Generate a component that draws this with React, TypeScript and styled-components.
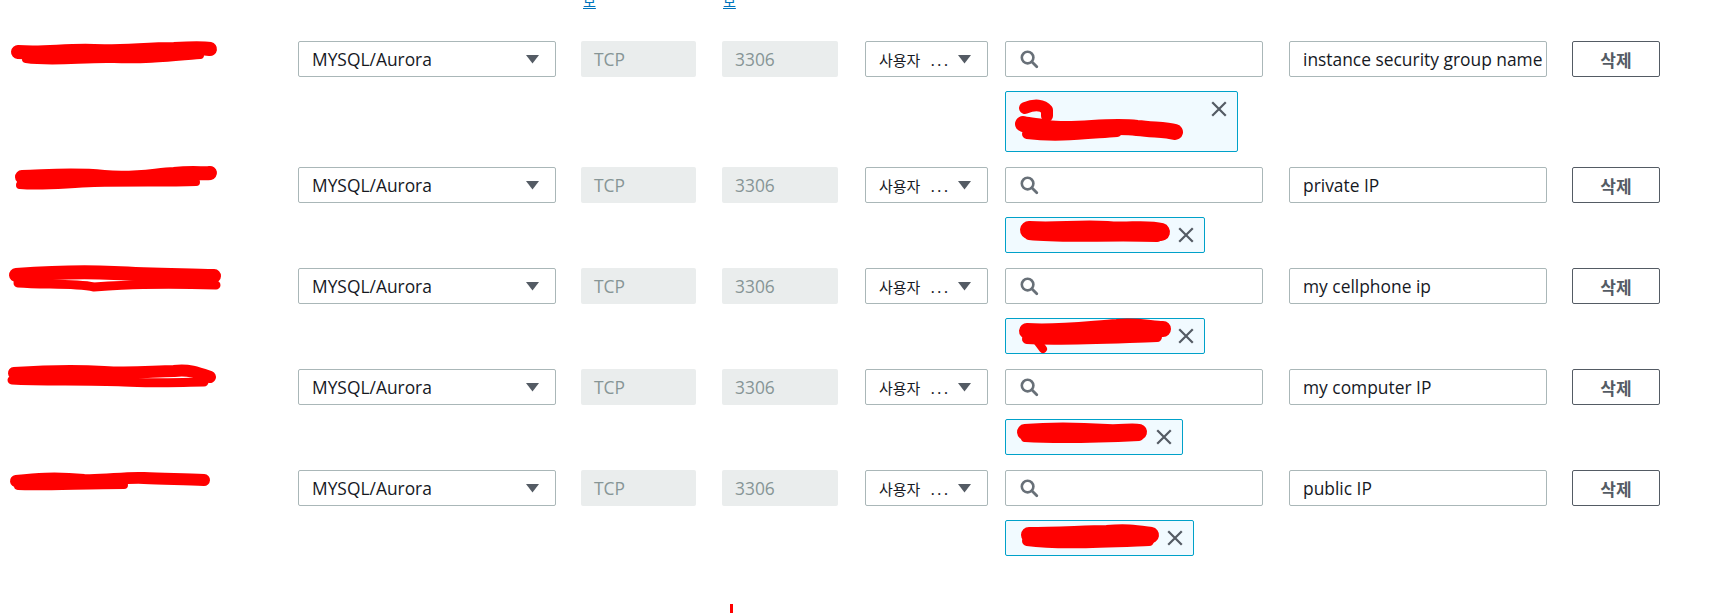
import React from "react";
import styled, { createGlobalStyle } from "styled-components";

const GlobalStyle = createGlobalStyle`
  html, body {
    margin: 0;
    padding: 0;
    background: #ffffff;
  }
  body {
    font-family: "Open Sans", "Noto Sans CJK KR", sans-serif;
    color: #16191f;
  }
`;

const COLUMNS = "298px 283px 141px 143px 140px 284px 283px 88px";

const Page = styled.div`
  width: 1725px;
  display: flex;
  flex-direction: column;
`;

const HeaderRow = styled.div`
  display: grid;
  grid-template-columns: ${COLUMNS};
  height: 20px;
  margin-top: -10px;
  align-items: end;
`;

const HeaderLink = styled.a<{ $col: number; $offset: number }>`
  grid-column: ${(p) => p.$col};
  padding-left: ${(p) => p.$offset}px;
  font-family: "Noto Sans CJK KR", sans-serif;
  font-size: 14px;
  line-height: 18px;
  color: #0073bb;
  text-decoration: underline;
  text-underline-offset: 1px;
`;

const RuleList = styled.div`
  display: flex;
  flex-direction: column;
  gap: 15px;
  margin-top: 31px;
`;

const RuleRow = styled.div`
  display: grid;
  grid-template-columns: ${COLUMNS};
  grid-template-rows: 36px auto;
  row-gap: 14px;
`;

const NameCell = styled.div`
  grid-column: 1;
  grid-row: 1;
  height: 36px;
`;

const NameScribble = styled.div`
  padding-left: 4px;
  padding-top: 1px;
`;

const Control = styled.div<{ $w: number }>`
  width: ${(p) => p.$w}px;
  height: 36px;
  box-sizing: border-box;
  border-radius: 2px;
  display: flex;
  align-items: center;
  font-size: 17.4px;
  white-space: nowrap;
  overflow: hidden;
`;

const SelectBox = styled(Control)`
  border: 1px solid #aab7b8;
  background: #ffffff;
  justify-content: space-between;
  padding: 0 16px 0 13px;
  color: #16191f;
`;

const SourceSelect = styled(SelectBox)`
  padding: 0 16px 0 13px;
`;

const SourceText = styled.span`
  font-family: "Noto Sans CJK KR", sans-serif;
  font-size: 15px;
`;

const Dots = styled.span`
  font-family: "Open Sans", sans-serif;
  font-size: 17px;
  letter-spacing: 2.2px;
  margin-left: 10px;
`;

const ReadOnlyField = styled(Control)`
  background: #eaeded;
  color: #879596;
  padding: 0 13px;
`;

const SearchField = styled(Control)`
  border: 1px solid #aab7b8;
  background: #ffffff;
  padding: 0 14px;
`;

const TextField = styled(Control)`
  border: 1px solid #aab7b8;
  background: #ffffff;
  padding: 0 12px 0 13px;
  color: #16191f;
`;

const DeleteButton = styled.button`
  width: 88px;
  height: 36px;
  box-sizing: border-box;
  border: 1px solid #545b64;
  border-radius: 2px;
  background: #ffffff;
  color: #545b64;
  font-family: "Noto Sans CJK KR", sans-serif;
  font-weight: 700;
  font-size: 17px;
  padding: 0;
  cursor: pointer;
`;

const Token = styled.div<{ $w: number; $h: number }>`
  grid-column: 6;
  grid-row: 2;
  width: ${(p) => p.$w}px;
  height: ${(p) => p.$h}px;
  box-sizing: border-box;
  border: 1px solid #00a1c9;
  border-radius: 2px;
  background: #f1faff;
  display: flex;
  align-items: flex-start;
  padding-left: 11px;
`;

const TokenLabel = styled.div<{ $w: number }>`
  width: ${(p) => p.$w}px;
  flex: none;
  height: 100%;
`;

const CloseButton = styled.button`
  width: 30px;
  height: 34px;
  margin-left: auto;
  margin-right: 3px;
  border: none;
  background: transparent;
  padding: 0;
  display: flex;
  align-items: center;
  justify-content: center;
  cursor: pointer;
`;

const Footer = styled.div`
  margin-top: 48px;
  margin-left: 730px;
  width: 3px;
  height: 9px;
  background: #ff0000;
`;

const ScribbleSvg = styled.svg`
  display: block;
  overflow: visible;
`;

const Caret = () => (
  <svg width="13" height="9" viewBox="0 0 13 9">
    <path d="M0 0 H13 L6.5 8.5 Z" fill="#545b64" />
  </svg>
);

const SearchIcon = () => (
  <svg width="19" height="19" viewBox="0 0 19 19">
    <circle cx="7.6" cy="7.6" r="5.8" fill="none" stroke="#687078" strokeWidth="2.6" />
    <path d="M11.8 11.8 L16.8 16.8" stroke="#687078" strokeWidth="2.8" strokeLinecap="round" />
  </svg>
);

const CloseIcon = () => (
  <svg width="16" height="16" viewBox="0 0 16 16">
    <path d="M2 2 L14 14 M14 2 L2 14" stroke="#545b64" strokeWidth="2.2" strokeLinecap="square" />
  </svg>
);

type Stroke = { d: string; w: number };

const Scribble = ({ width, height, strokes }: { width: number; height: number; strokes: Stroke[] }) => (
  <ScribbleSvg width={width} height={height} viewBox={`0 0 ${width} ${height}`}>
    {strokes.map((s, i) => (
      <path
        key={i}
        d={s.d}
        fill="none"
        stroke="#ff0000"
        strokeWidth={s.w}
        strokeLinecap="round"
        strokeLinejoin="round"
      />
    ))}
  </ScribbleSvg>
);

type Rule = {
  desc: string;
  name: Stroke[];
  token: { w: number; h: number; strokes: Stroke[] };
};

const rules: Rule[] = [
  {
    desc: "instance security group name",
    name: [
      { d: "M14 10 C40 12 60 8 90 9 C120 10 140 7 170 7 C190 6 200 6 206 7", w: 14 },
      { d: "M22 17 C50 21 80 16 110 17 C140 18 160 16 196 13", w: 8 },
    ],
    token: {
      w: 233,
      h: 61,
      strokes: [
        { d: "M8 16 C18 12 26 13 30 18 L30 24", w: 12 },
        { d: "M6 32 C14 34 24 34 30 36 C60 40 90 32 120 36 C140 38 150 38 158 40", w: 16 },
        { d: "M10 42 C40 46 70 42 100 40", w: 10 },
      ],
    },
  },
  {
    desc: "private IP",
    name: [
      { d: "M18 9 C50 8 70 6 100 9 C130 12 150 7 170 6 C190 4 200 6 206 5", w: 14 },
      { d: "M16 17 C40 19 60 16 90 15 C130 14 160 15 192 14", w: 8 },
    ],
    token: {
      w: 200,
      h: 36,
      strokes: [
        { d: "M12 12 C40 14 60 10 90 12 C110 14 130 10 144 14", w: 18 },
        { d: "M12 18 C50 22 90 18 140 20", w: 8 },
      ],
    },
  },
  {
    desc: "my cellphone ip",
    name: [
      { d: "M12 6 C40 4 70 2 110 4 C150 6 180 6 210 7", w: 14 },
      { d: "M14 14 C40 16 70 14 90 18 C120 16 150 14 212 16", w: 9 },
    ],
    token: {
      w: 200,
      h: 36,
      strokes: [
        { d: "M10 12 C40 14 70 10 100 8 C120 6 135 10 146 10", w: 16 },
        { d: "M10 20 C40 22 80 20 140 18", w: 10 },
        { d: "M20 22 L26 30", w: 8 },
      ],
    },
  },
  {
    desc: "my computer IP",
    name: [
      { d: "M10 3 C40 1 70 0 100 2 C130 4 150 1 170 1 C185 -1 195 3 206 7", w: 12 },
      { d: "M8 10 C40 12 80 10 120 12 C150 14 180 12 200 12", w: 9 },
    ],
    token: {
      w: 178,
      h: 36,
      strokes: [
        { d: "M8 12 C30 10 60 10 90 12 C105 13 115 10 122 12", w: 16 },
        { d: "M8 18 C40 20 80 19 122 17", w: 8 },
      ],
    },
  },
  {
    desc: "public IP",
    name: [
      { d: "M12 10 C30 8 50 6 80 9 C100 10 120 6 140 7 C160 8 180 8 200 9", w: 12 },
      { d: "M14 15 C40 16 80 14 120 14", w: 8 },
    ],
    token: {
      w: 189,
      h: 36,
      strokes: [
        { d: "M12 14 C40 14 70 12 90 12 C110 10 120 12 134 14", w: 16 },
        { d: "M10 20 C40 24 80 22 132 20", w: 10 },
      ],
    },
  },
];

export default function App() {
  return (
    <Page>
      <GlobalStyle />
      <HeaderRow>
        <HeaderLink $col={3} $offset={2}>보</HeaderLink>
        <HeaderLink $col={4} $offset={1}>보</HeaderLink>
      </HeaderRow>
      <RuleList>
        {rules.map((r, i) => (
          <RuleRow key={i}>
            <NameCell>
              <NameScribble>
                <Scribble width={222} height={30} strokes={r.name} />
              </NameScribble>
            </NameCell>
            <SelectBox $w={258}>
              <span>MYSQL/Aurora</span>
              <Caret />
            </SelectBox>
            <ReadOnlyField $w={115}>TCP</ReadOnlyField>
            <ReadOnlyField $w={116}>3306</ReadOnlyField>
            <SourceSelect $w={123}>
              <span>
                <SourceText>사용자</SourceText>
                <Dots>...</Dots>
              </span>
              <Caret />
            </SourceSelect>
            <SearchField $w={258}>
              <SearchIcon />
            </SearchField>
            <TextField $w={258}>{r.desc}</TextField>
            <DeleteButton>삭제</DeleteButton>
            <Token $w={r.token.w} $h={r.token.h}>
              <TokenLabel $w={r.token.w - 46}>
                <Scribble width={r.token.w - 46} height={r.token.h - 2} strokes={r.token.strokes} />
              </TokenLabel>
              <CloseButton aria-label="remove">
                <CloseIcon />
              </CloseButton>
            </Token>
          </RuleRow>
        ))}
      </RuleList>
      <Footer />
    </Page>
  );
}
